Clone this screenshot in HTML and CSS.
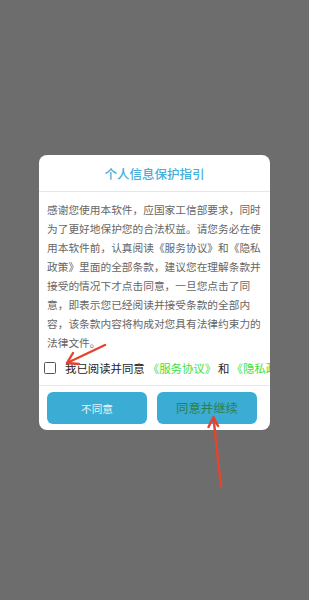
FILE: index.html
```html
<!DOCTYPE html>
<html lang="zh">
<head>
<meta charset="utf-8">
<link rel="stylesheet" href="styles.css">
</head>
<body>
<div class="screen">
  <div class="dialog">
    <div class="header">个人信息保护指引</div>
    <div class="content">感谢您使用本软件，应国家工信部要求，同时为了更好地保护您的合法权益。请您务必在使用本软件前，认真阅读《服务协议》和《隐私政策》里面的全部条款，建议您在理解条款并接受的情况下才点击同意，一旦您点击了同意，即表示您已经阅读并接受条款的全部内容，该条款内容将构成对您具有法律约束力的法律文件。</div>
    <div class="agree">
      <span class="box"></span>
      <span class="agree-text">我已阅读并同意<span class="link">《服务协议》</span>和<span class="link">《隐私政策》</span></span>
    </div>
    <div class="actions">
      <div class="btn btn-no">不同意</div>
      <div class="btn btn-yes">同意并继续</div>
    </div>
  </div>
  <svg class="arrows" width="309" height="600" viewBox="0 0 309 600">
    <g stroke="#e5432f" stroke-width="2.4" stroke-linecap="round" stroke-linejoin="round" fill="none">
      <line x1="105" y1="345" x2="67" y2="363"/>
      <polyline points="73,353 67,363 79,364"/>
      <line x1="221" y1="487" x2="213.5" y2="418"/>
      <polyline points="208.5,427 213.5,417 218,426"/>
    </g>
  </svg>
</div>
</body>
</html>
```
FILE: styles.css
```css
html, body {
  margin: 0;
  padding: 0;
}
body {
  background: #6d6d6d;
  font-family: "Noto Sans CJK SC", "Noto Sans", sans-serif;
}
.screen {
  position: relative;
  width: 309px;
  height: 600px;
  display: flex;
  justify-content: center;
  align-items: flex-start;
  padding-top: 155px;
  box-sizing: border-box;
}
.dialog {
  width: 231px;
  height: 275px;
  background: #ffffff;
  border-radius: 8px;
  overflow: hidden;
  display: flex;
  flex-direction: column;
}
.header {
  height: 37px;
  flex: none;
  display: flex;
  align-items: center;
  justify-content: center;
  color: #45aedb;
  font-size: 12.5px;
  font-weight: 500;
  border-bottom: 1px solid #e6e6e6;
  box-sizing: border-box;
}
.content {
  padding: 8px 8px 0 8px;
  font-size: 10.7px;
  line-height: 19px;
  color: #666666;
  height: 161px;
  box-sizing: border-box;
  flex: none;
}
.agree {
  display: flex;
  align-items: center;
  height: 33px;
  padding-left: 5px;
  white-space: nowrap;
  overflow: hidden;
  border-bottom: 1px solid #e6e6e6;
  box-sizing: border-box;
  flex: none;
  padding-bottom: 2px;
}
.box {
  width: 12px;
  height: 12px;
  border: 1.4px solid #555555;
  border-radius: 1.5px;
  box-sizing: border-box;
  flex: none;
  margin-right: 9px;
}
.agree-text {
  font-size: 11.4px;
  color: #222222;
}
.link {
  color: #3fe040;
  font-size: 11.4px;
  margin: 0 2px 0 3px;
}
.link + .link {
  margin-left: 2px;
}
.actions {
  display: flex;
  gap: 10px;
  padding: 6px 13px 0 8px;
}
.btn {
  flex: 1;
  height: 32px;
  border-radius: 6px;
  background: #3badd4;
  display: flex;
  align-items: center;
  justify-content: center;
}
.btn-no {
  color: #e6f4f9;
  font-size: 10.7px;
}
.btn-yes {
  color: #2f7f50;
  font-size: 12.4px;
}
.arrows {
  position: absolute;
  left: 0;
  top: 0;
  pointer-events: none;
}
```
